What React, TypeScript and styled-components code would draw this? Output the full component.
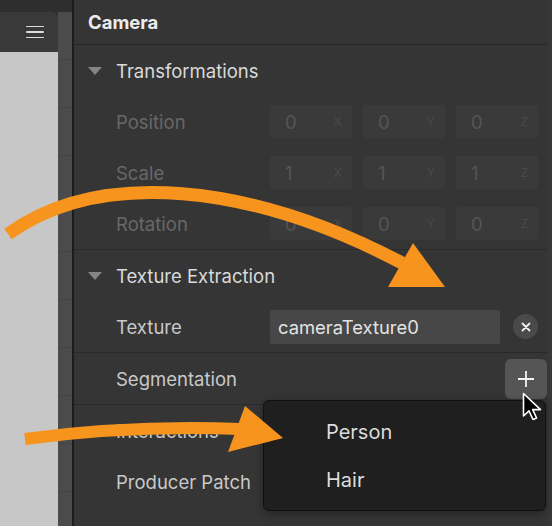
import React from "react";
import styled, { createGlobalStyle } from "styled-components";

const Global = createGlobalStyle`
  html, body { margin: 0; padding: 0; background: #353535; }
  body { font-family: Inter, "Noto Sans", "Liberation Sans", sans-serif; -webkit-font-smoothing: antialiased; }
  * { box-sizing: border-box; }
`;

const Page = styled.div`
  position: relative;
  width: 552px;
  height: 526px;
  display: flex;
  overflow: hidden;
`;

const Viewport = styled.div`
  width: 58px;
  display: flex;
  flex-direction: column;
  background: #2d2d2d;
`;

const TopGap = styled.div`
  height: 12px;
  background: #2e2e2e;
`;

const ViewBar = styled.div`
  height: 40px;
  background: #393939;
  border-top-right-radius: 6px;
  display: flex;
  align-items: center;
  justify-content: flex-end;
  padding-right: 14px;
`;

const Hamburger = styled.div`
  width: 18px;
  display: flex;
  flex-direction: column;
  gap: 4px;
  & > span {
    display: block;
    height: 1.6px;
    background: #dcdcdc;
    border-radius: 1px;
  }
`;

const Canvas = styled.div`
  flex: 1;
  background: #c7c7c7;
`;

const Gutter = styled.div`
  width: 14px;
  display: flex;
  flex-direction: column;
  &::before {
    content: "";
    height: 12px;
    background: #2e2e2e;
  }
  &::after {
    content: "";
    flex: 1;
    background: repeating-linear-gradient(
      to bottom,
      #4b4b4b 0px,
      #4b4b4b 47px,
      #444 47px,
      #444 48px
    );
  }
`;

const Seam = styled.div`
  width: 2px;
  background: #1c1c1c;
`;

const Inspector = styled.div`
  flex: 1;
  display: flex;
  flex-direction: column;
  background: #353535;
  border-right: 4px solid #383838;
`;

const Header = styled.div`
  height: 45px;
  flex-shrink: 0;
  display: flex;
  align-items: center;
  padding-left: 14px;
  padding-bottom: 1px;
  font-size: 18.5px;
  font-weight: 700;
  color: #ececec;
  border-bottom: 1px solid #282828;
`;

const Section = styled.div<{ $last?: boolean }>`
  display: flex;
  flex-direction: column;
  border-bottom: ${(p) => (p.$last ? "none" : "1px solid #2a2a2a")};
`;

const SectionHead = styled.div`
  height: 51px;
  display: flex;
  align-items: center;
  padding-left: 14px;
  font-size: 18.5px;
  color: #dadada;
`;

const Caret = styled.span`
  width: 0;
  height: 0;
  border-left: 7px solid transparent;
  border-right: 7px solid transparent;
  border-top: 8px solid #858585;
  margin-right: 14px;
`;

const Row = styled.div`
  height: 51px;
  display: flex;
  align-items: center;
  padding-left: 42px;
  padding-right: 1px;
`;

const Label = styled.div<{ $dim?: boolean }>`
  width: 154px;
  flex-shrink: 0;
  font-size: 18.5px;
  color: ${(p) => (p.$dim ? "#686868" : "#c9c9c9")};
`;

const VecGroup = styled.div`
  display: flex;
  gap: 11px;
`;

const VecField = styled.div`
  width: 82px;
  height: 33px;
  background: #3a3a3a;
  border-radius: 2px;
  display: flex;
  align-items: center;
  justify-content: space-between;
  padding: 0 10px 0 15px;
  font-size: 18.5px;
  color: #555;
  & > small {
    font-size: 12px;
    color: #4a4a4a;
  }
`;

const TextInput = styled.div`
  width: 230px;
  height: 34px;
  background: #474747;
  border-radius: 2px;
  display: flex;
  align-items: center;
  padding-left: 8px;
  font-size: 18.4px;
  color: #e2e2e2;
`;

const ClearButton = styled.div`
  width: 25px;
  height: 25px;
  margin-left: 13px;
  border-radius: 50%;
  background: #4a4a4a;
  display: flex;
  align-items: center;
  justify-content: center;
`;

const PlusButton = styled.div`
  margin-left: auto;
  width: 42px;
  height: 40px;
  border-radius: 6px;
  background: #555;
  display: flex;
  align-items: center;
  justify-content: center;
`;

const Menu = styled.div`
  position: absolute;
  left: 263px;
  top: 400px;
  width: 283px;
  height: 111px;
  background: #1f1f1f;
  border: 1px solid #101010;
  border-radius: 6px;
  box-shadow: 0 2px 8px rgba(0, 0, 0, 0.35);
  display: flex;
  flex-direction: column;
  padding-top: 7px;
`;

const MenuItem = styled.div`
  height: 48px;
  display: flex;
  align-items: center;
  padding-left: 62px;
  font-size: 20px;
  color: #dcdcdc;
`;

const Overlay = styled.svg`
  position: absolute;
  left: 0;
  top: 0;
  pointer-events: none;
`;

const Cursor = styled.svg`
  position: absolute;
  left: 522px;
  top: 392px;
`;

const vecRows = [
  { label: "Position", v: ["0", "0", "0"] },
  { label: "Scale", v: ["1", "1", "1"] },
  { label: "Rotation", v: ["0", "0", "0"] },
];
const axes = ["X", "Y", "Z"];

export default function App() {
  return (
    <>
      <Global />
      <Page>
        <Viewport>
          <TopGap />
          <ViewBar>
            <Hamburger>
              <span />
              <span />
              <span />
            </Hamburger>
          </ViewBar>
          <Canvas />
        </Viewport>
        <Gutter />
        <Seam />
        <Inspector>
          <Header>Camera</Header>
          <Section>
            <SectionHead>
              <Caret />
              Transformations
            </SectionHead>
            {vecRows.map((r) => (
              <Row key={r.label}>
                <Label $dim>{r.label}</Label>
                <VecGroup>
                  {r.v.map((val, i) => (
                    <VecField key={i}>
                      {val}
                      <small>{axes[i]}</small>
                    </VecField>
                  ))}
                </VecGroup>
              </Row>
            ))}
          </Section>
          <Section>
            <SectionHead>
              <Caret />
              Texture Extraction
            </SectionHead>
            <Row>
              <Label>Texture</Label>
              <TextInput>cameraTexture0</TextInput>
              <ClearButton>
                <svg width="10" height="10" viewBox="0 0 10 10">
                  <path d="M1.5 1.5 L8.5 8.5 M8.5 1.5 L1.5 8.5" stroke="#f0f0f0" strokeWidth="1.8" strokeLinecap="round" />
                </svg>
              </ClearButton>
            </Row>
          </Section>
          <Section>
            <Row>
              <Label>Segmentation</Label>
              <PlusButton>
                <svg width="18" height="18" viewBox="0 0 18 18">
                  <path d="M9 1 V17 M1 9 H17" stroke="#f2f2f2" strokeWidth="1.8" />
                </svg>
              </PlusButton>
            </Row>
          </Section>
          <Section $last>
            <Row>
              <Label>Interactions</Label>
            </Row>
            <Row>
              <Label>Producer Patch</Label>
            </Row>
          </Section>
        </Inspector>

        <Menu>
          <MenuItem>Person</MenuItem>
          <MenuItem>Hair</MenuItem>
        </Menu>

        <Cursor width="22" height="30" viewBox="0 0 22 30">
          <path
            d="M1.5 1.5 L1.5 24 L7 18.8 L11 27.5 L14.6 26 L10.7 17.6 L18.5 17.6 Z"
            fill="#000"
            stroke="#fff"
            strokeWidth="1.6"
            strokeLinejoin="round"
          />
        </Cursor>

        <Overlay width="552" height="526" viewBox="0 0 552 526">
          <path d="M8 234 C 100 168, 250 183, 402 263" fill="none" stroke="#f7941d" strokeWidth="13" />
          <polygon points="388,287 445,287 413,243" fill="#f7941d" />
          <path d="M25 439 Q 130 425 240 429" fill="none" stroke="#f7941d" strokeWidth="12" />
          <polygon points="245,406 228,452 283,438" fill="#f7941d" />
        </Overlay>
      </Page>
    </>
  );
}
